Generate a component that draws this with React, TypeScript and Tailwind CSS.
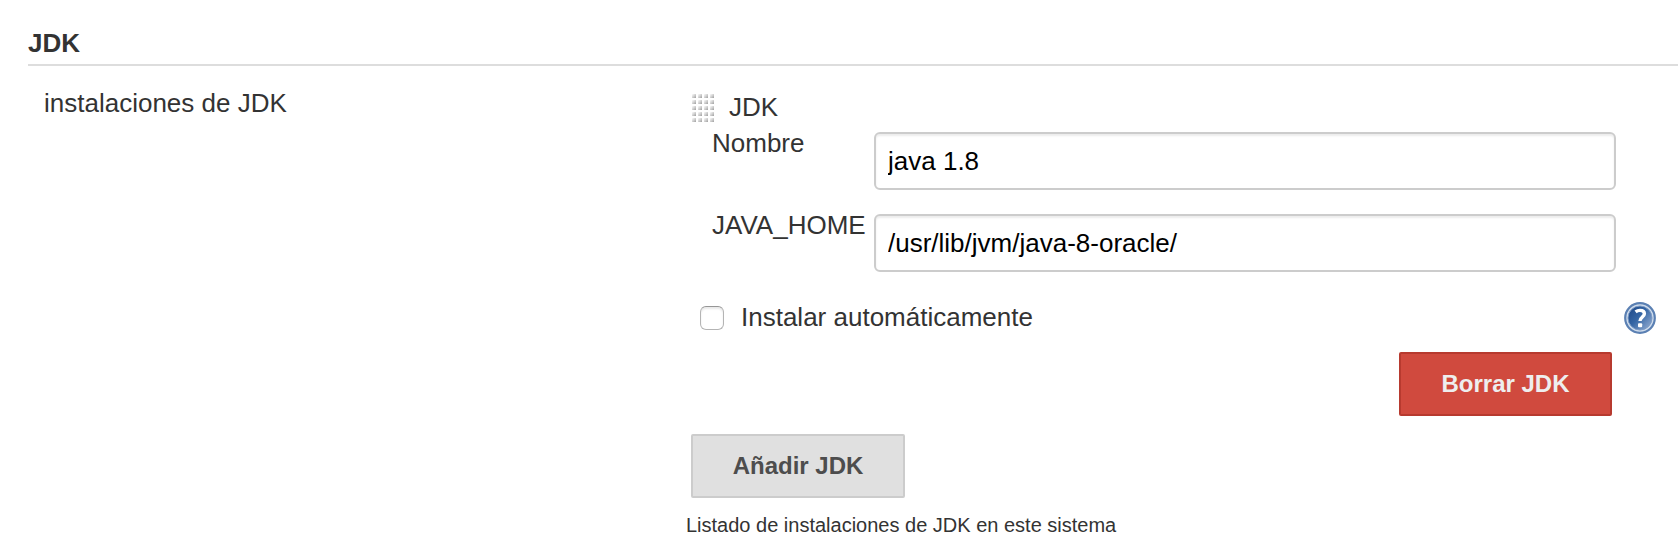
import React from "react";

function DragHandle() {
  const cells: React.ReactElement[] = [];
  for (let row = 0; row < 5; row++) {
    for (let col = 0; col < 4; col++) {
      cells.push(
        <rect key={`${row}-${col}`} x={col * 6} y={row * 6} width="4" height="4" fill="url(#grip)" />
      );
    }
  }
  return (
    <svg width="22" height="28" viewBox="0 0 22 28" className="mt-[6px] shrink-0">
      <defs>
        <linearGradient id="grip" x1="0" y1="0" x2="1" y2="1">
          <stop offset="0.1" stopColor="#f4f4f4" />
          <stop offset="0.5" stopColor="#d2d2d2" />
          <stop offset="0.9" stopColor="#a8a8a8" />
        </linearGradient>
      </defs>
      {cells}
    </svg>
  );
}

function HelpIcon() {
  return (
    <svg width="32" height="32" viewBox="0 0 32 32" className="block">
      <defs>
        <linearGradient id="help" x1="0.05" y1="0.1" x2="0.95" y2="0.9">
          <stop offset="0" stopColor="#1f4a8a" />
          <stop offset="0.45" stopColor="#3566a5" />
          <stop offset="1" stopColor="#8fa9cf" />
        </linearGradient>
      </defs>
      <circle cx="16" cy="16" r="14.8" fill="#cfdcec" stroke="#5b80b3" strokeWidth="2.2" />
      <circle cx="16" cy="16" r="12" fill="url(#help)" stroke="#7d9bc5" strokeWidth="1" />
      <path
        d="M11.6 9.8C13 8.7 14.4 8.4 16 8.4c2.8 0 4.4 1.2 4.4 3.4 0 3.1-4.4 3.5-4.4 7.2"
        fill="none"
        stroke="#fff"
        strokeWidth="3.4"
      />
      <rect x="14" y="21.2" width="4.2" height="4" rx="1" fill="#fff" />
    </svg>
  );
}

function Field({ label, value }: { label: string; value: string }) {
  return (
    <label className="flex h-[82px] items-start">
      <span className="w-[162px] shrink-0 leading-[30px]">{label}</span>
      <input
        type="text"
        defaultValue={value}
        className="mt-1 h-[58px] w-[742px] rounded-[6px] border-2 border-[#cccccc] bg-white px-[12px] text-[26px] text-black shadow-[inset_0_2px_2px_rgba(0,0,0,0.075)] outline-none"
      />
    </label>
  );
}

export default function App() {
  return (
    <main className="h-[554px] overflow-hidden bg-white pl-7 pt-7 font-['Liberation_Sans',Arial,sans-serif] text-[26px] leading-[30px] text-[#333333]">
      <h1 className="h-[38px] border-b-2 border-[#dddddd] font-bold">JDK</h1>
      <section className="flex items-start">
        <div className="w-[658px] shrink-0 pl-4 pt-[22px]">instalaciones de JDK</div>
        <div className="w-[970px] pt-[22px]">
          <div className="flex h-[40px] items-start pl-[6px]">
            <DragHandle />
            <span className="ml-[15px] mt-1">JDK</span>
          </div>
          <div className="pl-[26px]">
            <Field label="Nombre" value="java 1.8" />
            <Field label="JAVA_HOME" value="/usr/lib/jvm/java-8-oracle/" />
          </div>
          <div className="mt-[10px] flex h-[32px] items-start pl-[14px]">
            <input
              id="auto"
              type="checkbox"
              className="mt-1 size-6 appearance-none rounded-[6px] border border-[#b4b4b4] border-t-[#969696] bg-white shadow-[inset_0_2px_2px_rgba(0,0,0,0.09)]"
            />
            <label htmlFor="auto" className="ml-[17px]">Instalar automáticamente</label>
            <a className="ml-auto" aria-label="Ayuda">
              <HelpIcon />
            </a>
          </div>
          <div className="mt-[18px] flex justify-end pr-[44px]">
            <button className="h-[64px] w-[213px] rounded-[2px] border-2 border-[#b73a2f] bg-[#d04a3e] text-[24px] font-bold text-[#eeeeee]">
              Borrar JDK
            </button>
          </div>
          <button className="ml-[5px] mt-[18px] block h-[64px] w-[214px] rounded-[2px] border-2 border-[#cccccc] bg-[#e0e0e0] text-[24px] font-bold text-[#4d4d4d]">
            Añadir JDK
          </button>
          <p className="mt-[15px] text-[20px] leading-[24px]">Listado de instalaciones de JDK en este sistema</p>
        </div>
      </section>
    </main>
  );
}
